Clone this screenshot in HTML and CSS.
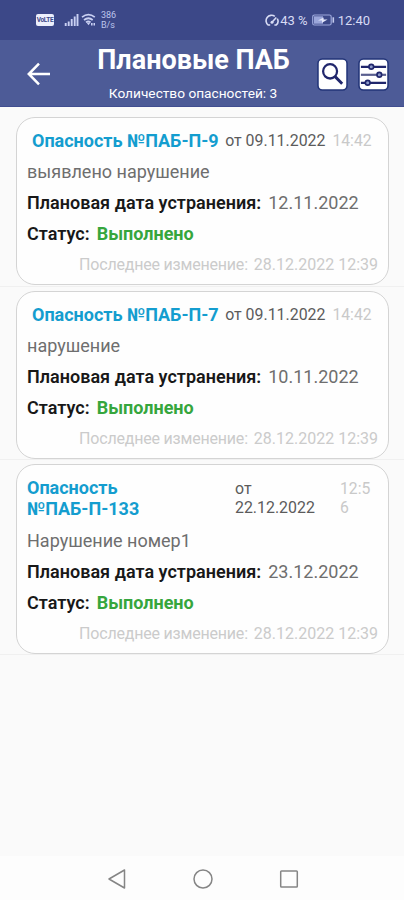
FILE: index.html
```html
<!DOCTYPE html>
<html lang="ru">
<head>
<meta charset="utf-8">
<title>Плановые ПАБ</title>
<link rel="stylesheet" href="styles.css">
</head>
<body>
<div class="screen">
  <div class="status">
    <span class="volte">VoLTE</span>
    <svg class="signal" width="15" height="14" viewBox="0 0 15 14"><path d="M1.7 13v-3M4.7 13V8.5M7.7 13V6M10.7 13V3.5M13.5 13V1" stroke="#c9d0f3" stroke-width="1.9" fill="none"/></svg>
    <svg class="wifi" width="15" height="14" viewBox="0 0 15 14"><path d="M1 4.2Q7.3-.8 13.8 4.2M3 7Q7.4 3.5 11.7 7M5 9.4Q7.3 7.5 9.5 9.4" stroke="#c9d0f3" stroke-width="1.7" fill="none"/><path d="M5.5 9.5h4l-2 2.7zM10 10h1.6v2.4H10zM12.5 10H14v2.4h-1.5z" fill="#c9d0f3"/></svg>
    <span class="speed">386<br>В/s</span>
    <span class="spacer"></span>
    <svg class="gauge" width="15" height="13" viewBox="0 0 15 13"><path d="M3.3 11.2A5.3 5.3 0 0 1 9.8 2.4M12.3 4.6a5.3 5.3 0 0 1-1.2 6.6M2.6 11h2.6M9.4 11H12M7 8.3l4.3-4.8" stroke="#d8dcf5" stroke-width="1.6" fill="none"/><circle cx="7" cy="8.3" r="1.5" fill="#d8dcf5"/></svg>
    <span class="percent">43 %</span>
    <svg class="battery" width="23" height="12" viewBox="0 0 23 12"><rect x=".7" y="1" width="18.5" height="10" rx="1.8" fill="none" stroke="#9ba6da" stroke-width="1.2"/><rect x="2" y="2.3" width="9" height="7.4" fill="#9ba6da"/><path d="M6 6.4l5.6-3v2h4L10 8.8V6.4z" fill="#e4e7fa"/><path d="M21.3 3.3v5.4" stroke="#c3caed" stroke-width="1.6"/></svg>
    <span class="clock">12:40</span>
  </div>
  <header class="bar">
    <svg class="back" width="24" height="24" viewBox="0 0 24 24"><path d="M23 12H2M12 1.7L1.8 12 12 22.3" stroke="#fff" stroke-width="2.5" fill="none"/></svg>
    <div class="heading">
      <h1>Плановые ПАБ</h1>
      <p>Количество опасностей: 3</p>
    </div>
    <svg class="tool" width="31" height="33" viewBox="0 0 32 33" preserveAspectRatio="none"><rect x="1" y="1" width="30" height="31" rx="4.5" fill="#fff" stroke="#223478" stroke-width="1.6"/><circle cx="13.5" cy="13.3" r="7.2" fill="none" stroke="#20266c" stroke-width="2.3"/><path d="M18.7 18.6l7.3 7.2" stroke="#20266c" stroke-width="3"/></svg>
    <svg class="tool" width="31" height="33" viewBox="0 0 32 33" preserveAspectRatio="none"><rect x="1" y="1" width="30" height="31" rx="4.5" fill="#fff" stroke="#223478" stroke-width="1.6"/><path d="M3 8.8h26M3 24.8h26" stroke="#20266c" stroke-width="2.2"/><path d="M3 16.8h26" stroke="#5a5f8f" stroke-width="2.2"/><g fill="#8f9ccb" stroke="#20266c" stroke-width="1.7"><circle cx="13.7" cy="8.8" r="2.4"/><circle cx="22" cy="16.8" r="2.4"/><circle cx="10" cy="24.8" r="2.4"/></g></svg>
  </header>
  <main class="list">
    <section class="item">
      <article class="card">
        <div class="top"><b class="name">Опасность №ПАБ-П-9</b><span class="date">от 09.11.2022</span><span class="time">14:42</span></div>
        <p class="text">выявлено нарушение</p>
        <p class="text"><b class="plan">Плановая дата устранения:</b><span class="due">12.11.2022</span></p>
        <p class="text"><b class="state">Статус:</b><b class="done">Выполнено</b></p>
        <p class="changed"><span class="label">Последнее изменение:</span><span class="when">28.12.2022 12:39</span></p>
      </article>
    </section>
    <section class="item">
      <article class="card">
        <div class="top"><b class="name">Опасность №ПАБ-П-7</b><span class="date">от 09.11.2022</span><span class="time">14:42</span></div>
        <p class="text">нарушение</p>
        <p class="text"><b class="plan">Плановая дата устранения:</b><span class="due">10.11.2022</span></p>
        <p class="text"><b class="state">Статус:</b><b class="done">Выполнено</b></p>
        <p class="changed"><span class="label">Последнее изменение:</span><span class="when">28.12.2022 12:39</span></p>
      </article>
    </section>
    <section class="item">
      <article class="card tall">
        <div class="top wrap"><b class="name">Опасность<br>№ПАБ-П-133</b><span class="date">от<br>22.12.2022</span><span class="time">12:5<br>6</span></div>
        <p class="text">Нарушение номер1</p>
        <p class="text"><b class="plan">Плановая дата устранения:</b><span class="due">23.12.2022</span></p>
        <p class="text"><b class="state">Статус:</b><b class="done">Выполнено</b></p>
        <p class="changed"><span class="label">Последнее изменение:</span><span class="when">28.12.2022 12:39</span></p>
      </article>
    </section>
  </main>
  <nav class="nav">
    <svg width="20" height="22" viewBox="0 0 20 22"><path d="M17.5 2v18L2 11z" fill="none" stroke="#858585" stroke-width="1.5" stroke-linejoin="round"/></svg>
    <svg width="20" height="22" viewBox="0 0 20 22"><circle cx="10" cy="11" r="9" fill="none" stroke="#858585" stroke-width="1.5"/></svg>
    <svg width="20" height="22" viewBox="0 0 20 22"><rect x="1.7" y="2.9" width="16.6" height="16.2" rx=".8" fill="none" stroke="#858585" stroke-width="1.5"/></svg>
  </nav>
</div>
</body>
</html>
```
FILE: styles.css
```css
* { box-sizing: border-box; }
body { margin: 0; font-family: Roboto, "Liberation Sans", sans-serif; background: #fafafa; }
h1, p { margin: 0; font-weight: inherit; }
b { font-weight: 700; }
.screen { width: 404px; height: 900px; display: flex; flex-direction: column; overflow: hidden; white-space: nowrap; }
.status { height: 40px; background: #3c4888; display: flex; align-items: center; padding: 0 34px 0 36px; color: #d8dcf5; flex: none; }
.volte { width: 18px; height: 12px; border-radius: 2px; background: #eceffc; color: #3c4888; font-size: 6.5px; line-height: 12px; font-weight: 700; text-align: center; letter-spacing: -.3px; }
.signal { margin-left: 10px; }
.wifi { margin-left: 2px; }
.speed { font-size: 9px; line-height: 10px; margin-left: 5px; color: #bcc5ec; }
.spacer { flex: 1; }
.percent { font-size: 13px; }
.battery { margin-left: 4px; }
.clock { font-size: 13px; margin-left: 3px; }
.bar { height: 67px; background: #4d5b97; display: flex; padding-left: 27px; color: #fff; flex: none; border-bottom: 1px solid #414e90; }
.back { margin-top: 22px; }
.heading { width: 256px; margin-left: 14px; text-align: center; }
.heading h1 { font-size: 27px; line-height: 30px; margin-top: 5px; padding-left: 1px; font-weight: 700; }
.heading p { font-size: 13.7px; line-height: 16px; margin-top: 10px; }
.tool { margin: 18px 0 0 -4px; }
.tool + .tool { margin-left: 10px; }
.list { flex: 1; padding-top: 6px; }
.item { padding: 4px 15px 3px 16px; border-bottom: 1px solid #f0f0f0; height: 173.5px; }
.item:last-child { height: 195px; }
.card { height: 168px; border: 1.5px solid #d4d4d4; border-radius: 19px; background: #fefefe; padding: 10px 10px 0; }
.card.tall { height: 190px; padding-top: 12px; }
.top { display: flex; height: 25px; line-height: 25px; padding-left: 5px; }
.name { color: #149dcf; font-size: 18px; }
.date { color: #5b5b5b; font-size: 15.9px; margin-left: 6.5px; }
.time { color: #c9c9c9; font-size: 15.7px; margin-left: 7px; }
.wrap { height: 45px; padding: 0; line-height: 21px; }
.wrap .name { width: 208px; }
.wrap .date, .wrap .time { line-height: 18.5px; margin-left: 0; padding-top: 3px; }
.wrap .date { width: 105px; }
.text { height: 31px; line-height: 38px; font-size: 18px; color: #6e6e6e; display: flex; }
.plan, .state { color: #181818; font-weight: 600; letter-spacing: .02px; }
.due { margin-left: 7px; }
.done { color: #36a63d; margin-left: 7px; }
.changed { display: flex; justify-content: flex-end; font-size: 16px; line-height: 37px; color: #cbcbcb; }
.label { letter-spacing: -.2px; }
.when { margin-left: 6px; }
.nav { height: 44px; background: #fdfdfd; display: flex; gap: 66px; padding: 12px 0 0 107px; flex: none; }
```
